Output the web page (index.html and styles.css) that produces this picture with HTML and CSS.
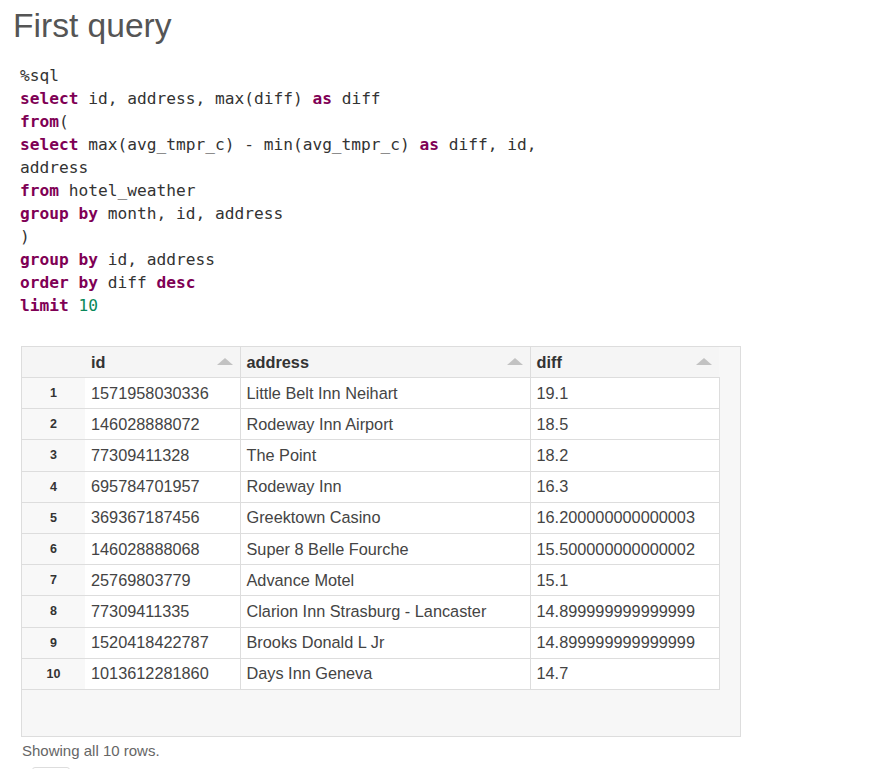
FILE: index.html
```html
<!DOCTYPE html>
<html>
<head>
<meta charset="utf-8">
<link rel="stylesheet" href="styles.css">
</head>
<body>
<h1 class="title">First query</h1>
<div class="code">
  <div class="ln">%sql</div>
  <div class="ln"><span class="kw">select</span> id, address, max(diff) <span class="kw">as</span> diff</div>
  <div class="ln"><span class="kw">from</span>(</div>
  <div class="ln"><span class="kw">select</span> max(avg_tmpr_c) - min(avg_tmpr_c) <span class="kw">as</span> diff, id,</div>
  <div class="ln">address</div>
  <div class="ln"><span class="kw">from</span> hotel_weather</div>
  <div class="ln"><span class="kw">group by</span> month, id, address</div>
  <div class="ln">)</div>
  <div class="ln"><span class="kw">group by</span> id, address</div>
  <div class="ln"><span class="kw">order by</span> diff <span class="kw">desc</span></div>
  <div class="ln"><span class="kw">limit</span> <span class="num">10</span></div>
</div>

<div class="grid">
  <table class="tbl">
    <colgroup>
      <col class="c-idx"><col class="c-id"><col class="c-addr"><col class="c-diff">
    </colgroup>
    <thead>
      <tr>
        <th class="idx"></th>
        <th><span>id</span><i class="sort"></i></th>
        <th><span>address</span><i class="sort"></i></th>
        <th><span>diff</span><i class="sort"></i></th>
      </tr>
    </thead>
    <tbody>
      <tr><td class="idx">1</td><td>1571958030336</td><td>Little Belt Inn Neihart</td><td>19.1</td></tr>
      <tr><td class="idx">2</td><td>146028888072</td><td>Rodeway Inn Airport</td><td>18.5</td></tr>
      <tr><td class="idx">3</td><td>77309411328</td><td>The Point</td><td>18.2</td></tr>
      <tr><td class="idx">4</td><td>695784701957</td><td>Rodeway Inn</td><td>16.3</td></tr>
      <tr><td class="idx">5</td><td>369367187456</td><td>Greektown Casino</td><td>16.200000000000003</td></tr>
      <tr><td class="idx">6</td><td>146028888068</td><td>Super 8 Belle Fourche</td><td>15.500000000000002</td></tr>
      <tr><td class="idx">7</td><td>25769803779</td><td>Advance Motel</td><td>15.1</td></tr>
      <tr><td class="idx">8</td><td>77309411335</td><td>Clarion Inn Strasburg - Lancaster</td><td>14.899999999999999</td></tr>
      <tr><td class="idx">9</td><td>1520418422787</td><td>Brooks Donald L Jr</td><td>14.899999999999999</td></tr>
      <tr><td class="idx">10</td><td>1013612281860</td><td>Days Inn Geneva</td><td>14.7</td></tr>
    </tbody>
  </table>
  <div class="gutter"></div>
</div>
<div class="footer">Showing all 10 rows.</div>
<div class="btn"></div>
</body>
</html>
```

FILE: styles.css
```css
html, body {
  margin: 0;
  padding: 0;
  background: #fff;
}
body {
  padding: 0 12px;
  font-family: "Liberation Sans", Arial, sans-serif;
  overflow: hidden;
  height: 769px;
}
.title {
  margin: 5px 0 0 1px;
  font-size: 33.6px;
  font-weight: normal;
  line-height: 41px;
  color: #555;
}
.code {
  margin: 18px 0 0 8px;
  font-family: "DejaVu Sans Mono", "Liberation Mono", monospace;
  font-size: 16.2px;
  line-height: 23px;
  color: #333;
}
.ln {
  white-space: pre;
  height: 23px;
}
.kw {
  color: #7f0055;
  font-weight: bold;
}
.num {
  color: #09885a;
}
.grid {
  margin: 29px 0 0 9px;
  width: 720px;
  height: 391px;
  box-sizing: border-box;
  border: 1px solid #ddd;
  background: #f7f7f7;
  display: flex;
  align-items: flex-start;
}
.tbl {
  border-collapse: collapse;
  table-layout: fixed;
  width: 697px;
  font-size: 16.3px;
  color: #444;
}
.c-idx { width: 63px; }
.c-id { width: 155px; }
.c-addr { width: 290px; }
.c-diff { width: 189px; }
.tbl th {
  height: 30px;
  padding: 0 0 0 6px;
  text-align: left;
  font-weight: bold;
  color: #333;
  background: #f5f5f5;
  border-bottom: 1px solid #ddd;
  border-right: 1px solid #ddd;
  position: relative;
}
.tbl th:last-child {
  border-right: none;
}
.tbl th.idx {
  border-right: none;
}
.sort {
  position: absolute;
  right: 7px;
  top: 11px;
  width: 0;
  height: 0;
  border-left: 8px solid transparent;
  border-right: 8px solid transparent;
  border-bottom: 7px solid #c2c2c2;
}
.tbl td {
  height: 30.2px;
  padding: 0 0 0 6px;
  background: #fff;
  border-bottom: 1px solid #ddd;
  border-right: 1px solid #ddd;
  white-space: nowrap;
  overflow: hidden;
}
.tbl td.idx {
  background: #f8f8f8;
  border-right: none;
  padding: 0;
  text-align: center;
  font-size: 12.5px;
  font-weight: bold;
  color: #333;
}
.gutter {
  flex: 1;
}
.footer {
  margin: 5px 0 0 10px;
  font-size: 15px;
  line-height: 18px;
  color: #666;
}
.btn {
  margin: 7px 0 0 20px;
  width: 36px;
  height: 20px;
  border: 1px solid #ddd;
  border-radius: 3px;
}
```
